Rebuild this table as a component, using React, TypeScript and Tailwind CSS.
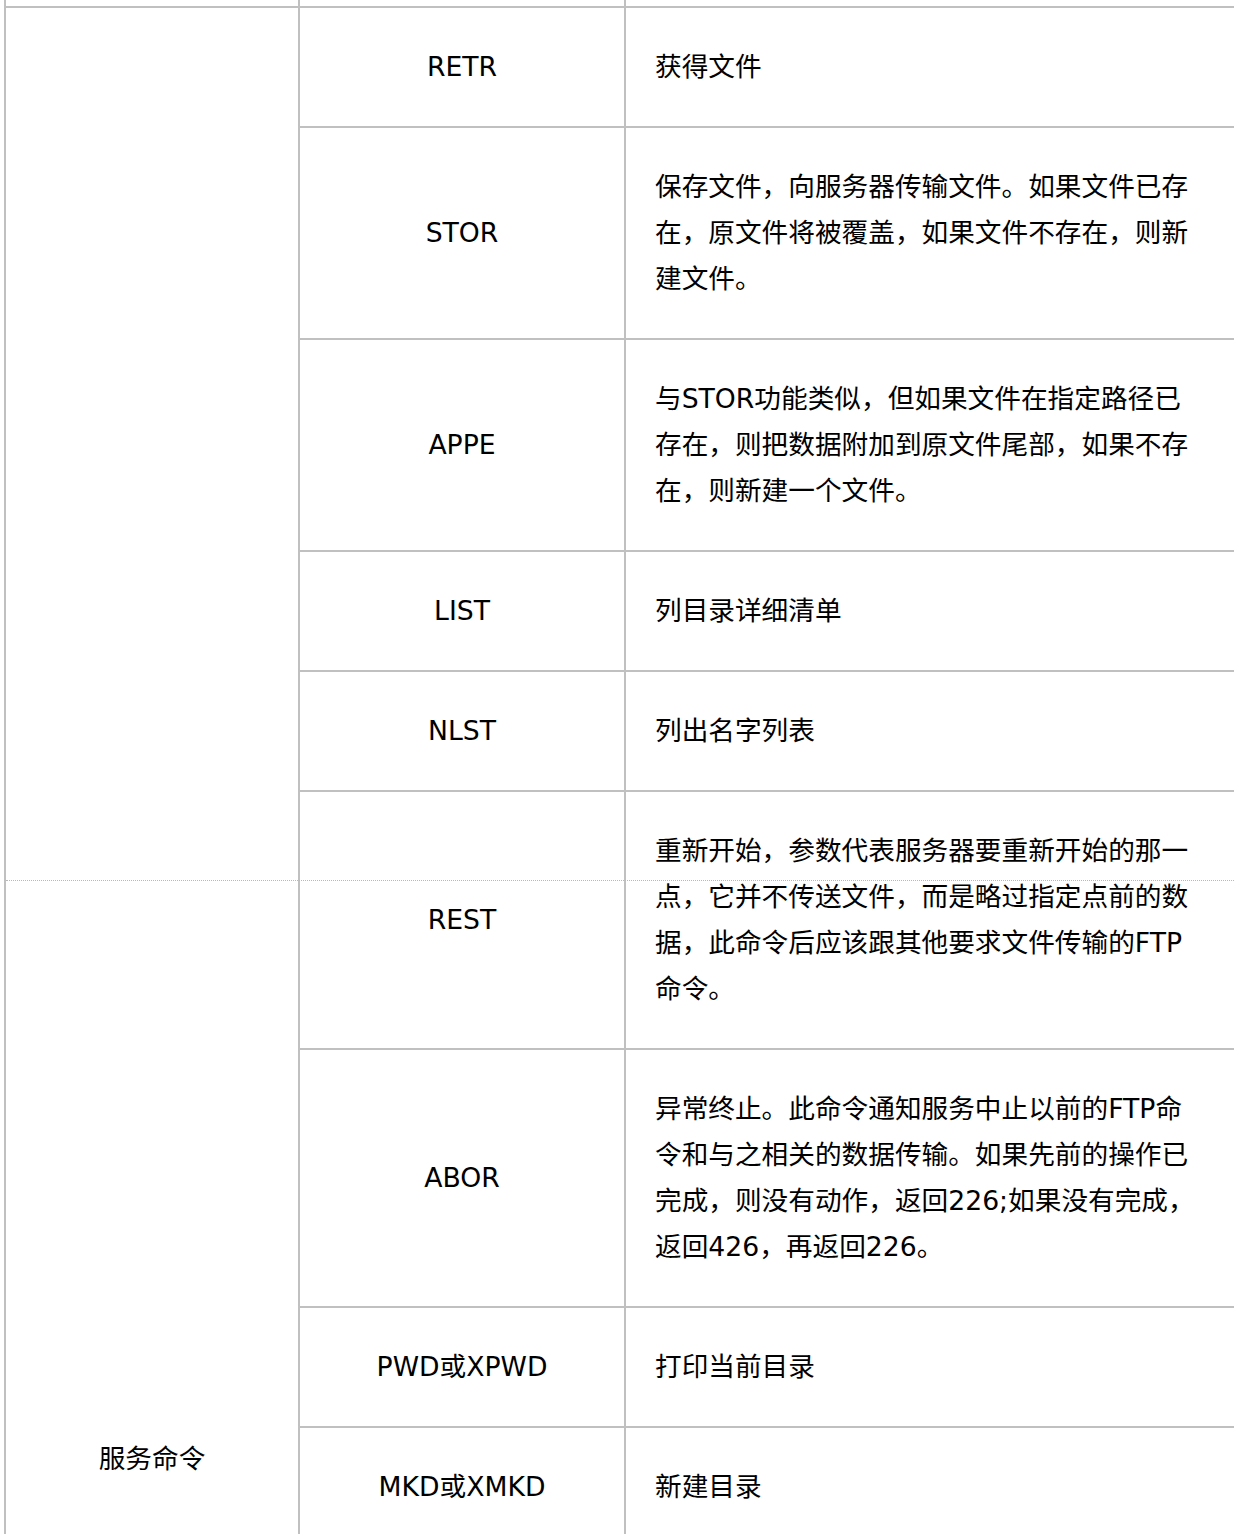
const rows: { cmd: string; lines: string[] }[] = [
  { cmd: 'RETR', lines: ['获得文件'] },
  {
    cmd: 'STOR',
    lines: ['保存文件，向服务器传输文件。如果文件已存', '在，原文件将被覆盖，如果文件不存在，则新', '建文件。'],
  },
  {
    cmd: 'APPE',
    lines: ['与STOR功能类似，但如果文件在指定路径已', '存在，则把数据附加到原文件尾部，如果不存', '在，则新建一个文件。'],
  },
  { cmd: 'LIST', lines: ['列目录详细清单'] },
  { cmd: 'NLST', lines: ['列出名字列表'] },
  {
    cmd: 'REST',
    lines: [
      '重新开始，参数代表服务器要重新开始的那一',
      '点，它并不传送文件，而是略过指定点前的数',
      '据，此命令后应该跟其他要求文件传输的FTP',
      '命令。',
    ],
  },
  {
    cmd: 'ABOR',
    lines: [
      '异常终止。此命令通知服务中止以前的FTP命',
      '令和与之相关的数据传输。如果先前的操作已',
      '完成，则没有动作，返回226;如果没有完成，',
      '返回426，再返回226。',
    ],
  },
  { cmd: 'PWD或XPWD', lines: ['打印当前目录'] },
  { cmd: 'MKD或XMKD', lines: ['新建目录'] },
]

export default function App() {
  return (
    <div className="relative h-[1534px] w-[1234px] overflow-hidden bg-white text-black font-['DejaVu_Sans','Noto_Sans_CJK_SC',sans-serif] text-[26.67px] leading-[46px]">
      <div className="flex pl-[4px]">
        {/* 左列：服务命令 */}
        <div className="flex w-[296px] shrink-0 flex-col border-l-2 border-r-2 border-[#c0c0c0]">
          <div className="h-[6px]" />
          <div className="flex flex-1 items-end justify-center border-t-2 border-[#c0c0c0] pb-[64px]">
            服务命令
          </div>
        </div>

        {/* 命令 + 说明 */}
        <div className="flex w-[960px] shrink-0 flex-col">
          <div className="flex h-[6px]">
            <div className="w-[326px] shrink-0 border-r-2 border-[#c0c0c0]" />
          </div>
          {rows.map((row) => (
            <div key={row.cmd} className="flex border-t-2 border-[#c0c0c0]">
              <div className="flex w-[326px] shrink-0 items-center justify-center border-r-2 border-[#c0c0c0] py-[36px]">
                {row.cmd}
              </div>
              <div className="flex-1 py-[36px] pl-[29px]">
                {row.lines.map((line, i) => (
                  <div key={i} className="whitespace-nowrap">
                    {line}
                  </div>
                ))}
              </div>
            </div>
          ))}
        </div>
      </div>

      {/* 分页虚线 */}
      <div className="absolute left-[6px] right-0 top-[880px] border-t border-dotted border-[#b8b8b8]" />
    </div>
  )
}
